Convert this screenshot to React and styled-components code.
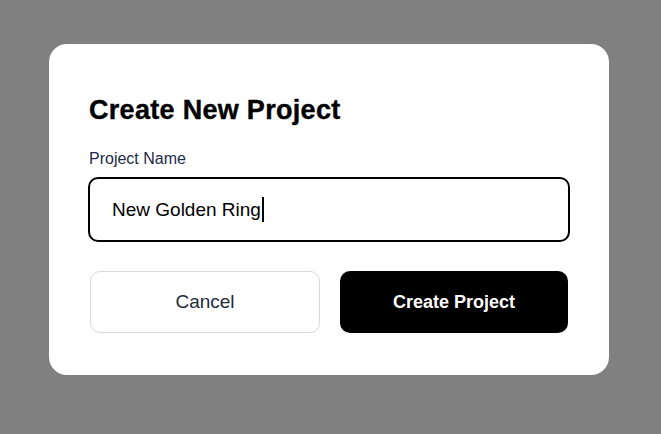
import React from "react";
import styled, { createGlobalStyle } from "styled-components";

const Global = createGlobalStyle`
  html, body { margin: 0; padding: 0; }
  body { font-family: "Liberation Sans", Arial, sans-serif; }
  * { box-sizing: border-box; }
`;

const Overlay = styled.div`
  width: 661px;
  height: 434px;
  background: #808080;
  display: flex;
  align-items: flex-start;
  justify-content: flex-start;
  padding: 44px 0 0 49px;
`;

const Modal = styled.div`
  width: 560px;
  background: #ffffff;
  border-radius: 18px;
  padding: 50px 40px 42px;
  display: flex;
  flex-direction: column;
`;

const Title = styled.h2`
  margin: 0 0 24px;
  font-size: 27px;
  line-height: 32px;
  font-weight: 700;
  color: #000;
  letter-spacing: 0.3px;
  -webkit-text-stroke: 0.4px #000;
`;

const Label = styled.label`
  font-size: 16px;
  line-height: 18px;
  color: #1e2a4a;
  margin-bottom: 9px;
`;

const Field = styled.div`
  position: relative;
  width: 482px;
  margin-left: -1px;
`;

const Input = styled.input`
  display: block;
  width: 100%;
  height: 65px;
  border: 2px solid #000;
  border-radius: 10px;
  padding: 0 21px 0 22px;
  font-family: inherit;
  font-size: 19px;
  color: #000;
  caret-color: transparent;
  outline: none;
  background: #fff;
`;

const Caret = styled.span`
  position: absolute;
  left: 174px;
  top: 20px;
  width: 1.5px;
  height: 25px;
  background: #000;
  pointer-events: none;
`;

const Actions = styled.div`
  display: grid;
  grid-template-columns: 230px 228px;
  gap: 20px;
  margin-top: 29px;
  margin-left: 1px;
`;

const Button = styled.button`
  height: 62px;
  border-radius: 10px;
  font-family: inherit;
  cursor: pointer;
  border: ${(p) => (p.$primary ? "none" : "1px solid #d6d9e0")};
  background: ${(p) => (p.$primary ? "#000" : "#fff")};
  color: ${(p) => (p.$primary ? "#fff" : "#1f2a3a")};
  font-size: ${(p) => (p.$primary ? "18px" : "19px")};
  font-weight: ${(p) => (p.$primary ? 700 : 400)};
`;

export default function App() {
  return (
    <>
      <Global />
      <Overlay>
        <Modal>
          <Title>Create New Project</Title>
          <Label htmlFor="pname">Project Name</Label>
          <Field>
            <Input id="pname" defaultValue="New Golden Ring" />
            <Caret />
          </Field>
          <Actions>
            <Button>Cancel</Button>
            <Button $primary>Create Project</Button>
          </Actions>
        </Modal>
      </Overlay>
    </>
  );
}
